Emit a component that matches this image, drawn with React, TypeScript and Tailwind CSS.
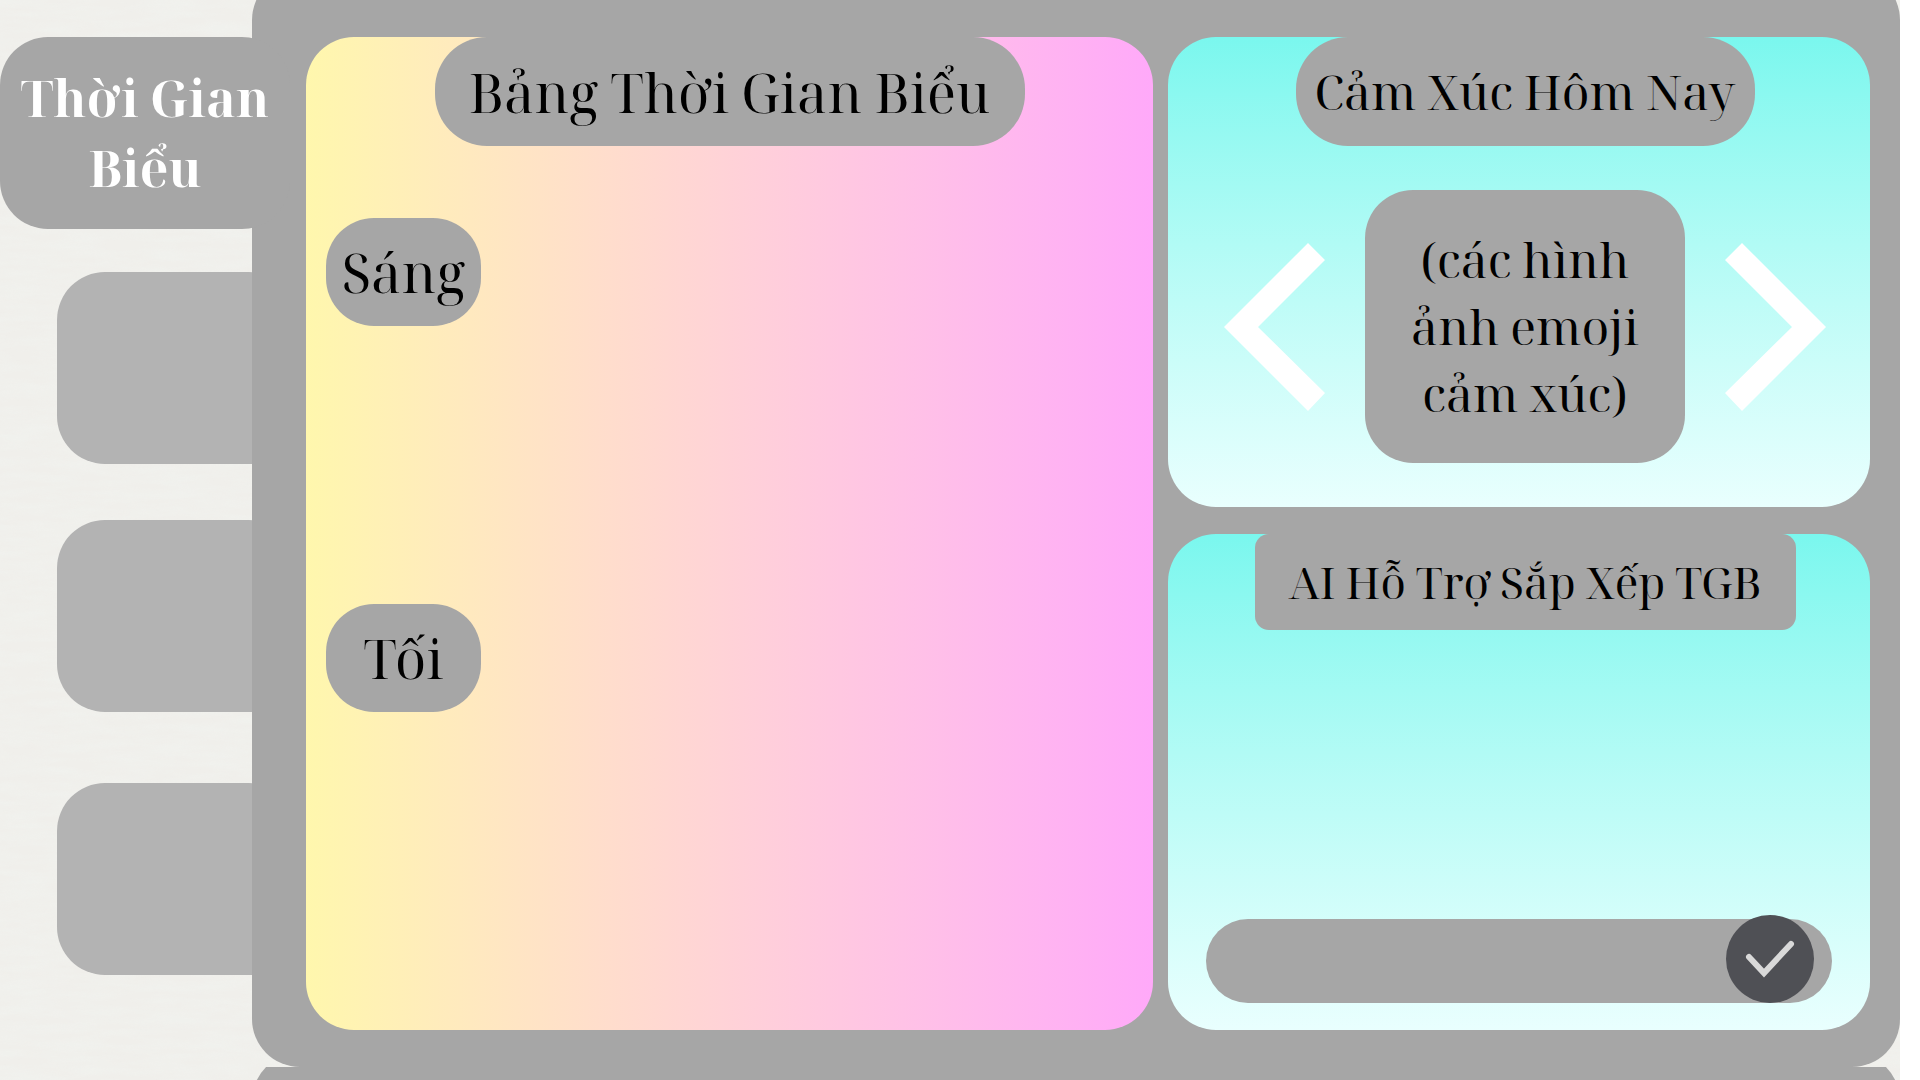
import React from "react";

const tabs = ["Mục 2", "Mục 3", "Mục 4"];
const tabSpacing = ["mt-[43px]", "mt-14", "mt-[71px]"];

function Paper() {
  return (
    <svg className="absolute inset-0 h-full w-full opacity-50" aria-hidden="true">
      <filter id="paper" x="0" y="0" width="100%" height="100%">
        <feTurbulence type="fractalNoise" baseFrequency="0.02 0.12" numOctaves="4" seed="4" />
        <feColorMatrix values="0 0 0 0 0.88  0 0 0 0 0.9  0 0 0 0 0.87  2 0 0 0 -0.6" />
      </filter>
      <rect width="100%" height="100%" filter="url(#paper)" />
    </svg>
  );
}

function Sidebar() {
  return (
    <nav className="flex w-[252px] shrink-0 flex-col pt-[37px]" aria-label="Trang">
      <button className="relative z-20 h-48 w-[290px] rounded-[48px] bg-[#a6a6a6] text-[50px] leading-[70px] font-bold text-white">
        Thời Gian
        <br />
        Biểu
      </button>
      {tabs.map((name, i) => (
        <button
          key={name}
          aria-label={name}
          className={`ml-[57px] h-48 w-60 rounded-[48px] bg-[#b3b3b3] ${tabSpacing[i]}`}
        />
      ))}
    </nav>
  );
}

function Schedule() {
  return (
    <section className="flex flex-col rounded-[48px] bg-linear-to-r from-[#fff7ad] to-[#ffa9f9] pl-5">
      <h1 className="-ml-5 flex h-[109px] w-[590px] items-center justify-center self-center rounded-[52px] bg-[#a6a6a6] text-[54px] leading-[72px]">
        Bảng Thời Gian Biểu
      </h1>
      <h2 className="mt-[72px] flex h-[108px] w-[155px] items-center justify-center rounded-[48px] bg-[#a6a6a6] text-[54px] leading-[72px]">
        Sáng
      </h2>
      <h2 className="mt-[278px] flex h-[108px] w-[155px] items-center justify-center rounded-[48px] bg-[#a6a6a6] text-[54px] leading-[72px]">
        Tối
      </h2>
    </section>
  );
}

function Arrow({ flip }: { flip?: boolean }) {
  return (
    <button aria-label={flip ? "Tiếp theo" : "Trước đó"} className="h-[168px] w-[101px] shrink-0">
      <svg viewBox="0 0 101 168" className="h-full w-full" fill="#fff" aria-hidden="true">
        <path
          d={
            flip
              ? "M17 0 101 84 17 168 0 150 67 84 0 17Z"
              : "M84 0 0 84 84 168 101 150 34 84 101 17Z"
          }
        />
      </svg>
    </button>
  );
}

function Mood() {
  return (
    <section className="flex h-[470px] flex-col items-center rounded-[48px] bg-linear-to-b from-[#7af7ee] to-[#e9fffe] pl-3">
      <h2 className="flex h-[109px] w-[459px] items-center justify-center rounded-[52px] bg-[#a6a6a6] text-[48px] leading-[67px] whitespace-nowrap">
        Cảm Xúc Hôm Nay
      </h2>
      <div className="mt-11 flex items-center gap-10">
        <Arrow />
        <p className="flex h-[273px] w-80 items-center justify-center rounded-[48px] bg-[#a6a6a6] text-center text-[48px] leading-[67px]">
          (các hình
          <br />
          ảnh emoji
          <br />
          cảm xúc)
        </p>
        <Arrow flip />
      </div>
    </section>
  );
}

function Assistant() {
  return (
    <section className="flex h-[496px] flex-col items-center rounded-[48px] bg-linear-to-b from-[#7af7ee] to-[#e9fffe] px-[38px] pb-[27px]">
      <h2 className="ml-3 flex h-[96px] w-[541px] items-center justify-center rounded-[14px] bg-[#a6a6a6] text-[44px] leading-[60px] whitespace-nowrap">
        AI Hỗ Trợ Sắp Xếp TGB
      </h2>
      <form className="relative mt-auto w-full" onSubmit={(e) => e.preventDefault()}>
        <input
          type="text"
          aria-label="Yêu cầu cho AI"
          className="block h-[84px] w-full rounded-full bg-[#a6a6a6] pr-32 pl-10 text-[32px] outline-none"
        />
        <button
          aria-label="Gửi"
          className="absolute right-[18px] bottom-0 h-[88px] w-[88px] rounded-full bg-[#4f5055]"
        >
          <svg viewBox="0 0 88 88" className="h-full w-full" fill="none" aria-hidden="true">
            <path d="M23 42 38 58 65 29" stroke="#d9d9d9" strokeWidth="6" strokeLinecap="round" />
          </svg>
        </button>
      </form>
    </section>
  );
}

export default function App() {
  return (
    <div className="flex h-screen overflow-hidden bg-white pr-5 font-['Noto_Serif_Display','Liberation_Serif',serif] text-black">
      <div className="relative flex min-w-0 flex-1 bg-[#f0efeb]">
        <Paper />
        <div className="relative flex min-w-0 flex-1">
          <Sidebar />
          <div className="relative z-10 flex min-w-0 flex-1 flex-col">
            <main className="-mt-7 grid shrink-0 grid-cols-[847fr_702fr] gap-[15px] rounded-[48px] bg-[#a6a6a6] pt-[65px] pr-[30px] pb-[37px] pl-[54px]">
              <Schedule />
              <div className="flex flex-col gap-[27px]">
                <Mood />
                <Assistant />
              </div>
            </main>
            <div className="flex-1 overflow-hidden">
              <div className="-mt-3.5 h-24 rounded-[48px] bg-[#a6a6a6]" />
            </div>
          </div>
        </div>
      </div>
    </div>
  );
}
